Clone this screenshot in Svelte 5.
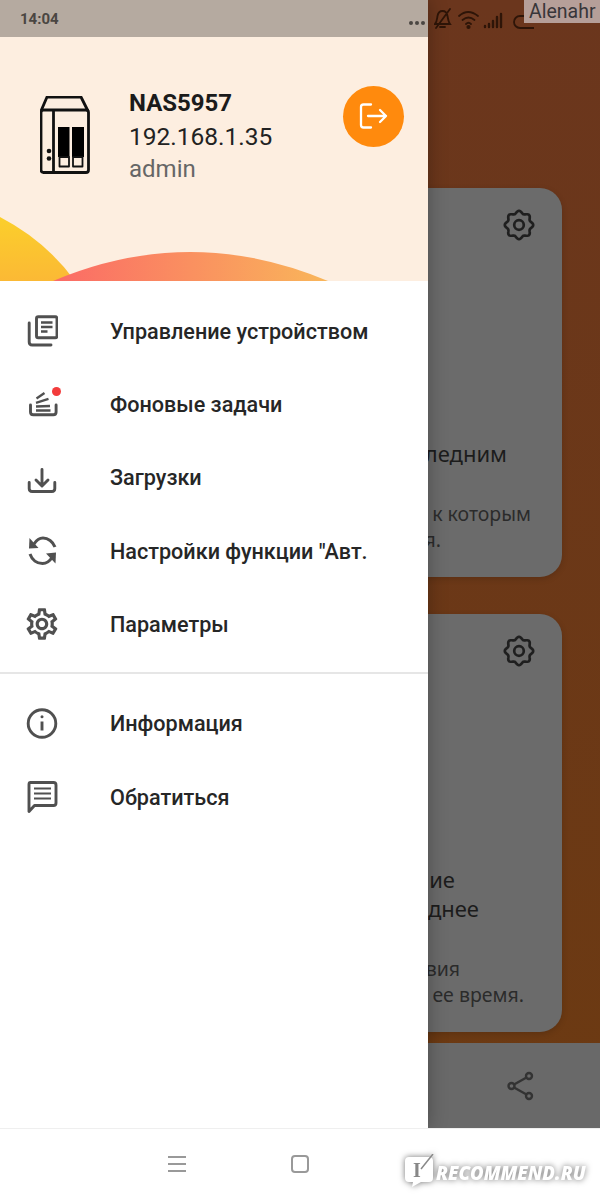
<script lang="ts">
	const cards = [
		{
			height: 389,
			title: [{ text: 'ледним', right: 55 }],
			body: [
				{ text: 'к которым', right: 31 },
				{ text: 'я.', right: 121 }
			]
		},
		{
			height: 418,
			title: [
				{ text: 'ие', right: 107 },
				{ text: 'днее', right: 83 }
			],
			body: [
				{ text: 'вия', right: 102 },
				{ text: 'ее время.', right: 38 }
			]
		}
	];

	const mainMenu = [
		{ label: 'Управление устройством', icon: 'device' },
		{ label: 'Фоновые задачи', icon: 'tasks' },
		{ label: 'Загрузки', icon: 'download' },
		{ label: 'Настройки функции "Авт.', icon: 'sync' },
		{ label: 'Параметры', icon: 'settings' }
	];
	const otherMenu = [
		{ label: 'Информация', icon: 'info' },
		{ label: 'Обратиться', icon: 'chat' }
	];

	// wavy outline of the small gear on the cards
	function flower() {
		let d = '';
		for (let i = 0; i < 96; i++) {
			const a = (i / 96) * Math.PI * 2;
			const r = 12.9 + 1.3 * Math.cos(8 * a);
			d += `${i ? 'L' : 'M'}${(16 + r * Math.cos(a)).toFixed(2)} ${(16 + r * Math.sin(a)).toFixed(2)}`;
		}
		return d + 'Z';
	}
	const flowerPath = flower();
</script>

{#snippet menuIcon(name)}
	<svg class="icon" viewBox="0 0 32 32" width="32" height="32" fill="none" stroke="#505050" stroke-width="2.900" stroke-linecap="round" stroke-linejoin="round">
		{#if name === 'device'}
			<rect x="10.500" y="1.800" width="20.500" height="21" rx="1.800" />
			<path d="M3.200 8v19q0 3 3 3H25" />
			<path d="M15 7.500h11.500M15 12h11.500M15 16.500h6.500" stroke-width="2.300" stroke-linecap="butt" />
		{:else if name === 'tasks'}
			<path d="M4.500 17v7q0 2.800 2.800 2.800h20q2.800 0 2.800-2.800v-7" />
			<path d="M10 22.500h14.500M10 18.500l14-.5M10 14.800l12.500-4M10.500 10.500L18.500 5" stroke-width="2.300" stroke-linecap="butt" />
		{:else if name === 'download'}
			<path d="M3.200 20.500v6q0 3 3 3h19.600q3 0 3-3v-6" />
			<path d="M16 7.500v16M10 18l6 6 6-6" />
		{:else if name === 'sync'}
			<path d="M8 9c2.500-4 5-6 9-6 5 0 10 3.500 12 9" stroke-width="3" stroke-linecap="butt" />
			<path d="M3.500 3l-.5 10.500 9.500-.5z" fill="#505050" stroke="none" />
			<path d="M4 19c2 6 7 9.500 12.500 9.500 4 0 7-2 9.500-6" stroke-width="3" stroke-linecap="butt" />
			<path d="M29.500 28.500l.5-11-10 1z" fill="#505050" stroke="none" />
		{:else if name === 'settings'}
			<g transform="translate(-3 -3) scale(1.580)" fill="#505050" stroke="none">
				<path d="M19.43 12.98c.04-.32.07-.64.07-.98 0-.34-.03-.66-.07-.98l2.11-1.650c.19-.15.24-.42.12-.64l-2-3.460c-.09-.16-.26-.25-.44-.25-.06 0-.12.01-.17.03l-2.490 1c-.52-.4-1.080-.73-1.690-.98l-.38-2.650C14.460 2.180 14.250 2 14 2h-4c-.25 0-.46.18-.49.42l-.38 2.650c-.61.25-1.170.59-1.690.98l-2.490-1c-.06-.02-.12-.03-.18-.03-.17 0-.34.09-.43.25l-2 3.460c-.13.22-.07.49.12.64l2.110 1.650c-.04.32-.07.65-.07.98 0 .33.03.66.07.98l-2.110 1.650c-.19.15-.24.42-.12.64l2 3.460c.09.16.26.25.44.25.06 0 .12-.01.17-.03l2.490-1c.52.4 1.080.73 1.690.98l.38 2.650c.03.24.24.42.49.42h4c.25 0 .46-.18.49-.42l.38-2.650c.61-.25 1.170-.59 1.690-.98l2.490 1c.06.02.12.03.18.03.17 0 .34-.09.43-.25l2-3.460c.12-.22.07-.49-.12-.64l-2.110-1.650zm-1.980-1.710c.04.31.05.52.05.73 0 .21-.02.43-.05.73l-.14 1.130.89.7 1.080.84-.7 1.210-1.270-.51-1.040-.42-.9.68c-.43.32-.84.56-1.250.73l-1.060.43-.16 1.130-.2 1.350h-1.400l-.19-1.350-.16-1.130-1.060-.43c-.43-.18-.83-.41-1.230-.71l-.91-.7-1.060.43-1.270.51-.7-1.210 1.080-.84.89-.7-.14-1.130c-.03-.31-.05-.54-.05-.74s.02-.43.05-.73l.14-1.130-.89-.7-1.080-.84.7-1.210 1.270.51 1.040.42.9-.68c.43-.32.84-.56 1.250-.73l1.060-.43.16-1.130.2-1.350h1.390l.19 1.350.16 1.130 1.060.43c.43.18.83.41 1.230.71l.91.7 1.060-.43 1.270-.51.7 1.210-1.070.85-.89.7.14 1.130zM12 8c-2.210 0-4 1.790-4 4s1.790 4 4 4 4-1.790 4-4-1.790-4-4-4zm0 6c-1.100 0-2-.9-2-2s.9-2 2-2 2 .9 2 2-.9 2-2 2z" />
			</g>
		{:else if name === 'info'}
			<circle cx="16" cy="15.500" r="13.800" />
			<path d="M16 13.500v9" stroke-linecap="butt" />
			<circle cx="16" cy="8.800" r="1.500" fill="#505050" stroke="none" />
		{:else if name === 'chat'}
			<path d="M4.500 1.500h23q2.500 0 2.500 2.500v18q0 2.500-2.500 2.500H8.500L3 30.500V3.500q0-2 1.500-2z" />
			<path d="M8 7.500h17M8 12.500h17M8 17.500h17" stroke-width="2.200" stroke-linecap="butt" />
		{/if}
	</svg>
{/snippet}

<div class="screen">
	<div class="backdrop">
		<div class="status">
			<svg viewBox="0 0 100 24" width="100" height="24" fill="none" stroke="#2e1508" stroke-width="1.800" stroke-linecap="round">
				<path d="M1 18c2-2 2-5 2.500-8 .5-3 2.500-5 5-5s4.500 2 5 5c.5 3 1 6 2.500 8zM6 21h5M2 22L16 3" />
				<path d="M25 10q9-8 19 0M28.500 14q6-5 12 0M32 18q2.500-2.500 5 0" />
				<circle cx="34.500" cy="21" r="1.200" fill="#2e1508" />
				<path d="M51 20v1M55 18v3M59 15v6M63 11v10M67 8v13" stroke-width="2.400" />
				<rect x="80" y="10" width="26" height="12" rx="6" />
			</svg>
		</div>
		<div class="cards">
			{#each cards as card}
				<section class="card" style="height: {card.height}px">
					<svg class="gear" viewBox="0 0 32 32" width="32" height="32" fill="none" stroke="#1f1f1f" stroke-width="2.700" stroke-linejoin="round">
						<path d={flowerPath} />
						<circle cx="16" cy="16" r="4.800" />
					</svg>
					<div class="lines">
						{#each card.title as line}
							<p class="title" style="padding-right: {line.right}px">{line.text}</p>
						{/each}
					</div>
					<div class="lines body">
						{#each card.body as line}
							<p class="desc" style="padding-right: {line.right}px">{line.text}</p>
						{/each}
					</div>
				</section>
			{/each}
		</div>
		<div class="bar">
			<svg viewBox="0 0 32 32" width="32" height="32" fill="none" stroke="#333" stroke-width="2.400">
				<circle cx="25" cy="6" r="3" />
				<circle cx="7.500" cy="16" r="3" />
				<circle cx="25" cy="26" r="3" />
				<path d="M10 14.500L22.500 7.500M10 17.500l12.500 7" />
			</svg>
		</div>
	</div>

	<aside class="drawer">
		<div class="drawer-status">
			<span class="time">14:04</span>
			<span class="dots"><i></i><i></i><i></i></span>
		</div>
		<header class="profile">
			<svg class="hills" viewBox="0 0 428 64" width="428" height="64">
				<defs>
					<linearGradient id="sun" x1="0" y1="0" x2="0" y2="1">
						<stop offset="0" stop-color="#fbcf2b" />
						<stop offset="1" stop-color="#fbb935" />
					</linearGradient>
					<linearGradient id="hill" x1="0" y1="0" x2="1" y2="0">
						<stop offset="0" stop-color="#fb6a66" />
						<stop offset="1" stop-color="#f9b65a" />
					</linearGradient>
				</defs>
				<path d="M0 0Q46 24 75 64H0Z" fill="url(#sun)" />
				<path d="M53 64Q190 6 328 64Z" fill="url(#hill)" />
			</svg>
			<svg class="nas" viewBox="40 96 50 78" width="50" height="78" fill="none" stroke="#111" stroke-width="2.800" stroke-linejoin="round">
				<path d="M41 111l6-14h34l7 14" />
				<rect x="41" y="110" width="47.500" height="62.500" rx="2.500" />
				<path d="M53.500 110v62.500" />
				<rect x="58" y="127" width="11.500" height="30" fill="#000" stroke="none" />
				<rect x="72" y="127" width="12" height="30" fill="#000" stroke="none" />
				<rect x="59.500" y="157" width="9.500" height="9.500" stroke-width="1.800" />
				<rect x="73" y="157" width="9.500" height="9.500" stroke-width="1.800" />
				<circle cx="49" cy="151" r="2.300" fill="#111" stroke="none" />
				<circle cx="49" cy="158.500" r="2.300" fill="#111" stroke="none" />
			</svg>
			<div class="host">
				<strong>NAS5957</strong>
				<span>192.168.1.35</span>
				<small>admin</small>
			</div>
			<button class="logout" aria-label="logout">
				<svg viewBox="0 0 32 32" width="32" height="32" fill="none" stroke="#fff" stroke-width="2.300" stroke-linecap="round" stroke-linejoin="round">
					<path d="M14 4.500H6.500Q4 4.500 4 7v18q0 2.500 2.500 2.500H14" />
					<path d="M11 16h18M23 10l6 6-6 6" />
				</svg>
			</button>
		</header>
		<nav class="menu">
			{#each mainMenu as item}
				<div class="row">
					<span class="icon-wrap">
						{@render menuIcon(item.icon)}
						{#if item.icon === 'tasks'}<i class="badge"></i>{/if}
					</span>
					<span>{item.label}</span>
				</div>
			{/each}
		</nav>
		<hr />
		<nav class="menu">
			{#each otherMenu as item}
				<div class="row">
					<span class="icon-wrap">{@render menuIcon(item.icon)}</span>
					<span>{item.label}</span>
				</div>
			{/each}
		</nav>
	</aside>

	<div class="watermark">Alenahr</div>

	<footer class="nav">
		<span class="burger"><i></i><i></i><i></i></span>
		<span class="square"></span>
	</footer>

	<div class="recommend">
		<svg viewBox="0 0 30 36" width="30" height="36">
			<path d="M5 3h20q4 0 4 4v17q0 4-4 4H17l-9 5 1-5H5q-4 0-4-4V7q0-4 4-4z" fill="#fff" />
			<path d="M17 15L29 0" stroke="#888" stroke-width="1.500" />
			<text x="9" y="23" class="logo-i">I</text>
		</svg>
		<span>RECOMMEND.RU</span>
	</div>
</div>

<style>
	:global(body) { margin: 0; background: #fff; font-family: Roboto, "Noto Sans", sans-serif; }
	.screen { position: relative; width: 600px; height: 1200px; overflow: hidden; background: #fff; }

	.backdrop { display: flex; flex-direction: column; height: 1128px; background: linear-gradient(#6b361d, #6c3a12); }
	.status { display: flex; height: 37px; padding: 6px 0 0 434px; box-sizing: border-box; overflow: hidden; }
	.cards { display: flex; flex-direction: column; gap: 37px; padding: 151px 38px 11px 38px; }
	.card {
		position: relative;
		display: flex;
		flex-direction: column;
		justify-content: flex-end;
		box-sizing: border-box;
		padding-bottom: 24px;
		border-radius: 22px;
		background: #6b6b6b;
		box-shadow: 0 2px 6px rgba(0,0,0,.15);
		font-family: "Noto Sans", sans-serif;
	}
	.gear { position: absolute; top: 21px; right: 27px; }
	.lines { display: flex; flex-direction: column; align-items: flex-end; }
	.body { margin-top: 33px; }
	.lines p { margin: 0; white-space: nowrap; }
	.title { font-size: 22px; line-height: 29px; color: #1c1c1c; }
	.desc { font-size: 19.500px; line-height: 26px; color: #2b2b2b; }
	.bar { flex: 1; display: flex; justify-content: flex-end; align-items: center; padding-right: 64px; background: #696969; }

	.drawer {
		position: absolute;
		top: 0;
		left: 0;
		width: 428px;
		height: 1128px;
		background: #fff;
		box-shadow: 0 0 18px rgba(0,0,0,.3);
	}
	.drawer-status {
		display: flex;
		justify-content: space-between;
		align-items: center;
		height: 37px;
		padding: 0 3px 0 20px;
		background: #b5aaa0;
	}
	.time { font-size: 15px; font-weight: 700; color: #4a4642; }
	.dots { display: flex; gap: 2px; margin-top: 9px; }
	.dots i { width: 4px; height: 4px; border-radius: 50%; background: #4a4642; }

	.profile {
		position: relative;
		display: flex;
		align-items: flex-start;
		height: 244px;
		background: #fdeee0;
	}
	.hills { position: absolute; left: 0; bottom: 0; }
	.nas { flex: none; margin: 59px 0 0 40px; }
	.host { display: flex; flex-direction: column; margin: 50px 0 0 39px; color: #222; }
	.host strong { font-size: 24px; line-height: 33px; font-weight: 700; color: #1b1b1b; }
	.host span { font-size: 24.500px; line-height: 33px; }
	.host small { font-size: 24px; line-height: 33px; color: #666; }
	.logout {
		display: flex;
		align-items: center;
		justify-content: center;
		position: absolute;
		top: 48.500px;
		left: 342.500px;
		width: 61px;
		height: 61px;
		padding: 0;
		border: 0;
		border-radius: 50%;
		background: #ff8a0d;
	}

	.menu { display: flex; flex-direction: column; }
	.profile + .menu { padding-top: 13.500px; }
	.row { display: flex; align-items: center; height: 73.330px; padding-left: 26px; font-size: 21.600px; font-weight: 500; color: #262626; white-space: nowrap; }
	.icon-wrap { position: relative; display: flex; width: 32px; height: 32px; margin-right: 52px; }
	.badge { position: absolute; top: -1px; right: -3px; width: 9px; height: 9px; border-radius: 50%; background: #f33c3c; }
	hr { height: 2px; margin: 11px 0 13px; border: 0; background: #e6e6e6; }

	.watermark {
		position: absolute;
		top: 0;
		right: 0;
		width: 76px;
		height: 23px;
		padding-left: 5px;
		box-sizing: border-box;
		background: #b69f99;
		color: #38363a;
		font-size: 19.500px;
		line-height: 23px;
		white-space: nowrap;
	}

	.nav {
		position: relative;
		display: flex;
		align-items: center;
		gap: 105px;
		height: 72px;
		box-sizing: border-box;
		padding: 0 0 2px 168px;
		border-top: 1px solid #efefef;
		background: #fff;
	}
	.burger { display: flex; flex-direction: column; gap: 5px; width: 18px; }
	.burger i { height: 2px; background: #999; }
	.square { width: 14px; height: 14px; border: 2px solid #999; border-radius: 4px; }

	.recommend {
		position: absolute;
		top: 1154px;
		left: 404px;
		display: flex;
		align-items: center;
		gap: 2px;
		filter: drop-shadow(0 0 3px rgba(0,0,0,.55));
	}
	.recommend span {
		font-family: "Open Sans", sans-serif;
		font-size: 18.500px;
		font-weight: 800;
		font-style: italic;
		color: #fff;
	}
	.logo-i { font-family: "Liberation Serif", serif; font-size: 20px; font-weight: 700; fill: #888; }
</style>
